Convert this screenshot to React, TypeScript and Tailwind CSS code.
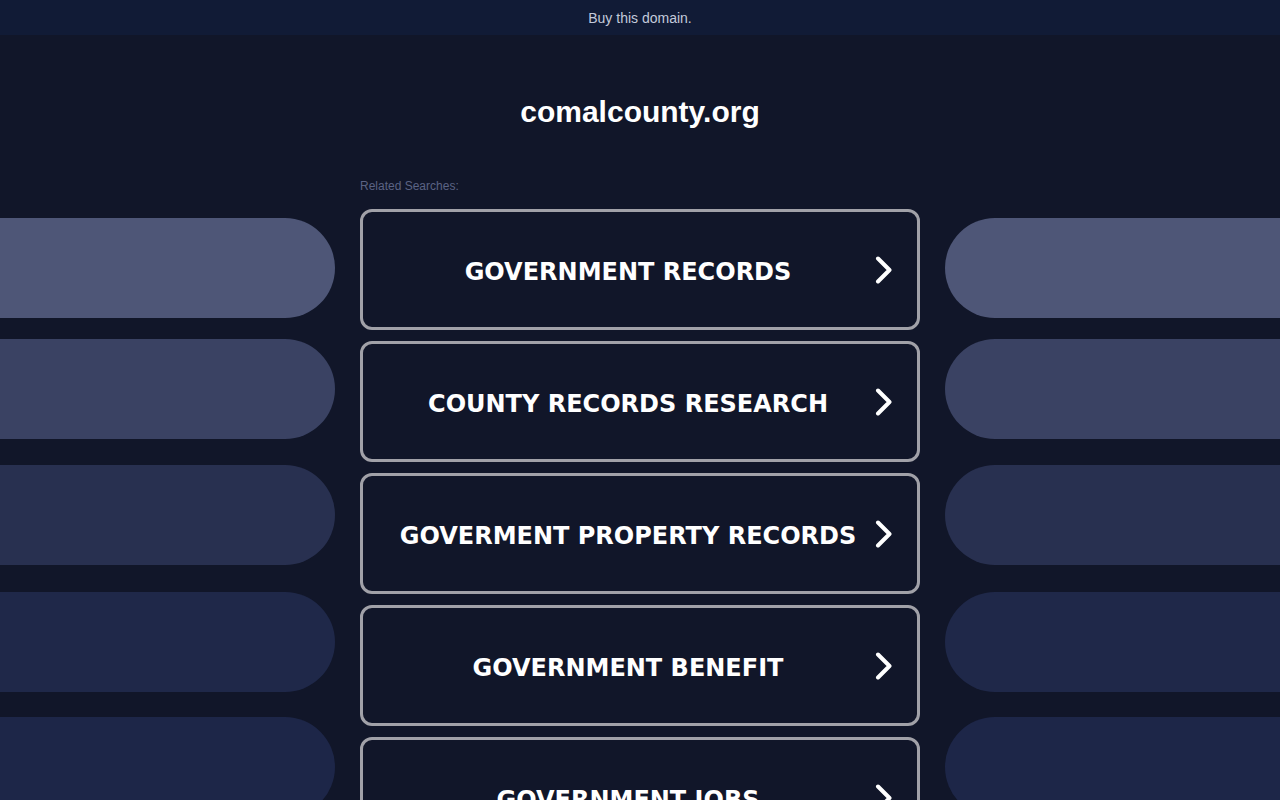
import React from "react";

const searches = [
    "GOVERNMENT RECORDS",
    "COUNTY RECORDS RESEARCH",
    "GOVERMENT PROPERTY RECORDS",
    "GOVERNMENT BENEFIT",
    "GOVERNMENT JOBS",
];

// side pills, tops are a bit uneven in the shot
const pills = [
    {bg: "bg-[#4e5677]", mt: "mt-0"},
    {bg: "bg-[#3a4263]", mt: "mt-[21px]"},
    {bg: "bg-[#283050]", mt: "mt-[26px]"},
    {bg: "bg-[#1f2849]", mt: "mt-[27px]"},
    {bg: "bg-[#1d2648]", mt: "mt-[25px]"},
];

function Chevron() {
    return (
        <svg width="24" height="28" viewBox="0 0 24 28" fill="none" className="shrink-0">
            <path d="M5 2.5L16.5 14L5 25.5" stroke="white" strokeWidth="4" strokeLinecap="round" strokeLinejoin="round"/>
        </svg>
    );
}

export default function App() {
    return (
        <div className="h-[800px] overflow-hidden bg-[#111629] font-['Liberation_Sans',Arial,sans-serif]">
            {/* buy bar */}
            <div className="h-[35px] bg-[#111b36] flex items-center justify-center pt-[2px]">
                <span className="text-[14px] text-[#c3cadb]">Buy this domain.</span>
            </div>

            <div className="pt-[59px] text-center">
                <h1 className="text-[30px] leading-[36px] font-bold text-white">comalcounty.org</h1>
            </div>

            <div className="grid grid-cols-[335px_560px_335px] gap-x-[25px] mt-[47px]">
                <div className="flex flex-col pt-[41px]">
                    {pills.map((p, i) => (
                        <div key={i} className={`h-[100px] shrink-0 rounded-r-[50px] ${p.bg} ${p.mt}`}/>
                    ))}
                </div>

                <div>
                    <p className="text-[12px] leading-[16px] text-[#5b6384] pt-[1px]">Related Searches:</p>
                    <div className="mt-[15px] flex flex-col gap-[11px]">
                        {searches.map((s) => (
                            <a key={s} href="#"
                               className="h-[121px] shrink-0 border-[3px] border-[#a1a1a8] rounded-[12px] bg-[#111629] flex items-center px-5">
                                <span className="flex-1 text-center text-white font-bold text-[24px] font-['DejaVu_Sans',Verdana,sans-serif] pt-[5px]">
                                    {s}
                                </span>
                                <Chevron/>
                            </a>
                        ))}
                    </div>
                </div>

                <div className="flex flex-col pt-[41px]">
                    {pills.map((p, i) => (
                        <div key={i} className={`h-[100px] shrink-0 rounded-l-[50px] ${p.bg} ${p.mt}`}/>
                    ))}
                </div>
            </div>
        </div>
    );
}
